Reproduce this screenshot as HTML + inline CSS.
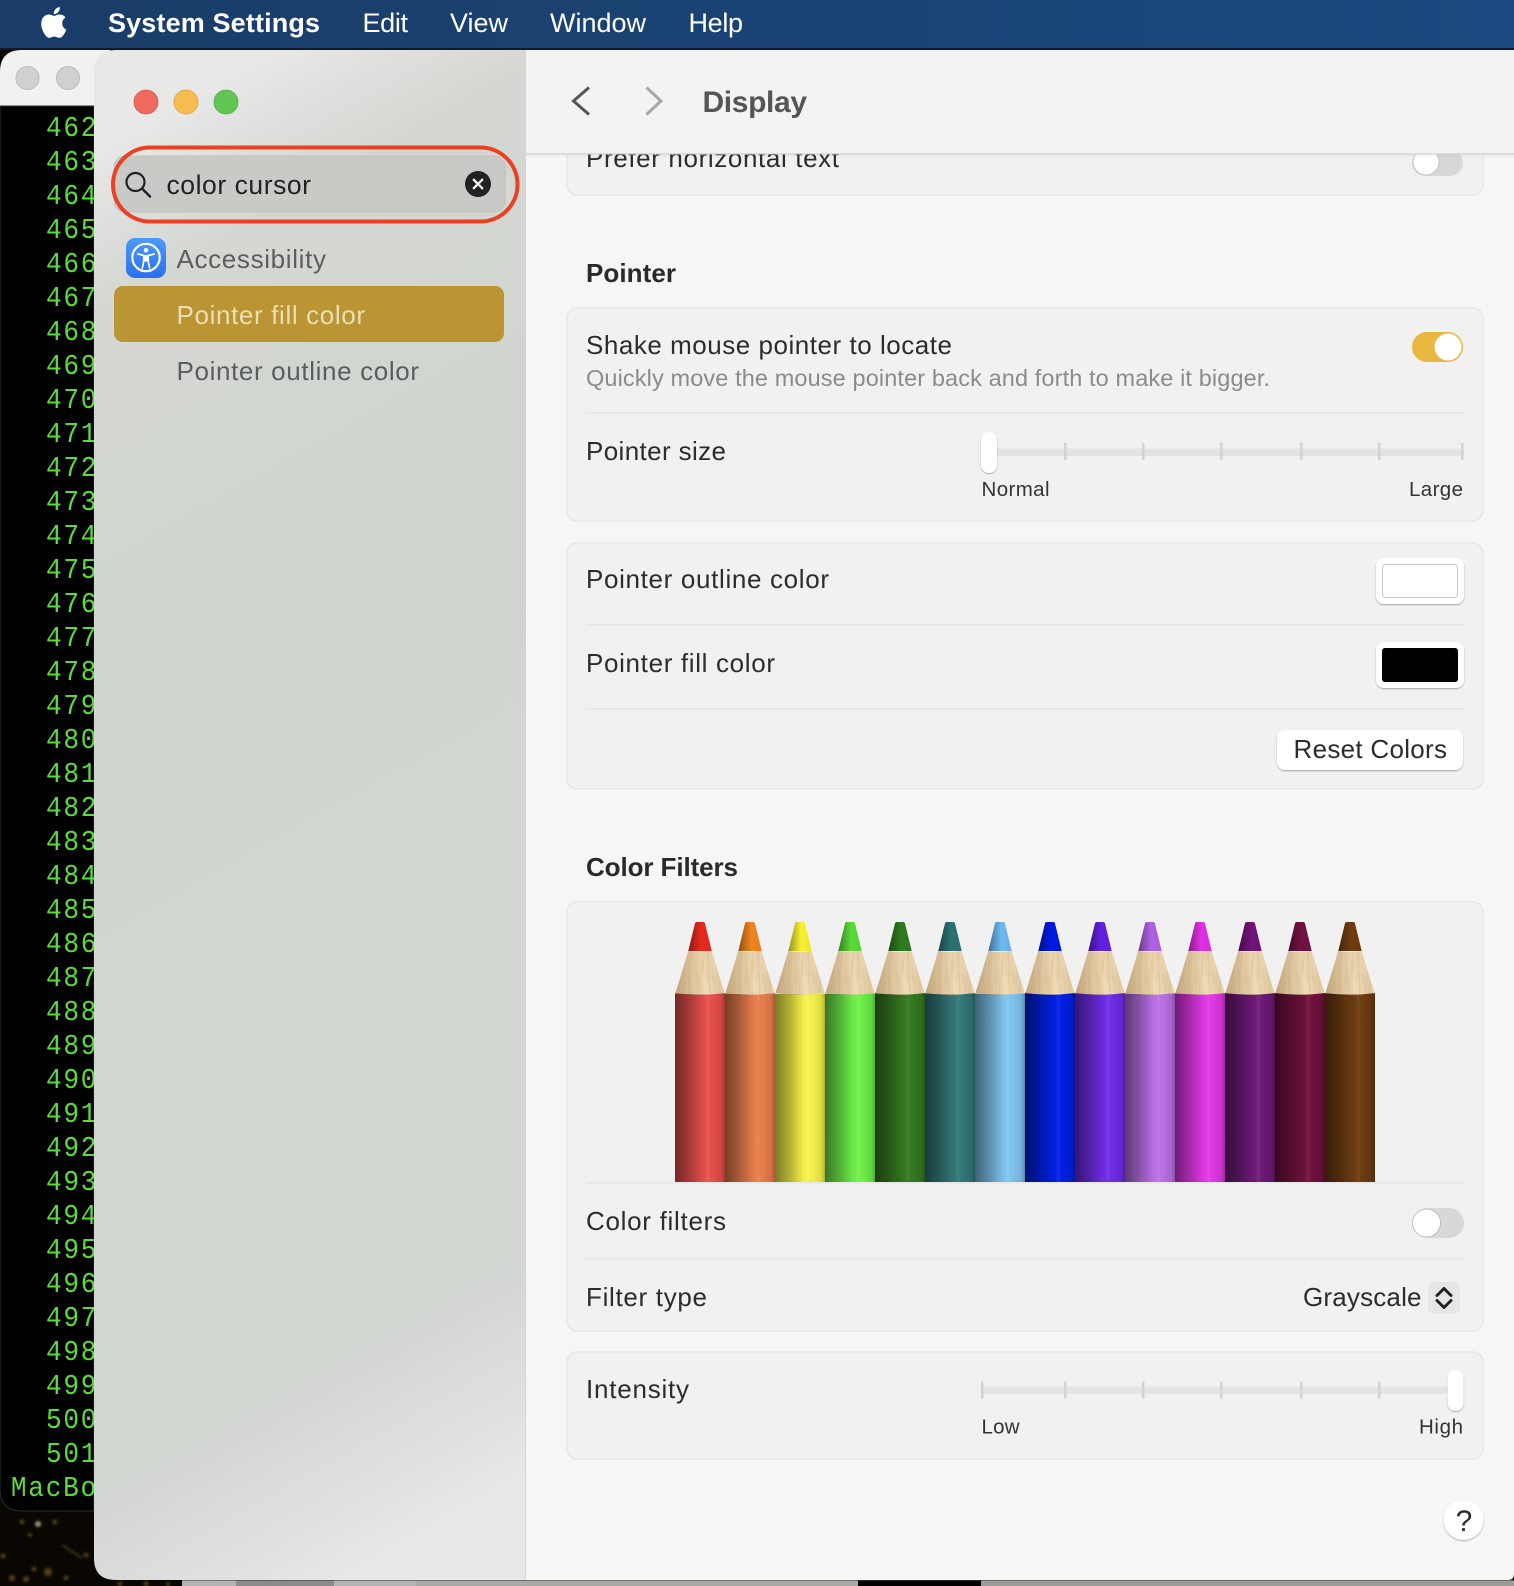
<!DOCTYPE html>
<html lang="en">
<head>
<meta charset="utf-8">
<title>System Settings - Display</title>
<style>
html,body{margin:0;padding:0;background:#0a0703;width:1514px;height:1586px;overflow:hidden}
svg{display:block}
text{font-family:"Liberation Sans",sans-serif}
.t{font-size:26px;fill:#2c2c2c}
.s{font-size:23.5px;fill:#8b8b8b}
.m{font-size:20.5px;fill:#333}
.b{font-size:26px;font-weight:700;fill:#2a2a2a}
.mn{font-size:27px;fill:#fff}
.n{font-size:26px;fill:#59605b}
.c{font-family:"Liberation Mono",monospace;font-size:29px;fill:#5cdc3c;letter-spacing:1.93px}
.card{fill:#f1f1f1;stroke:#e7e7e7;stroke-width:1.5}
.tk{fill:#d2d2d2}
</style>
</head>
<body>
<svg xmlns="http://www.w3.org/2000/svg" width="1514" height="1586" viewBox="0 0 1514 1586">
<defs>
<linearGradient id="menu" x1="0" x2="1" y1="0" y2="0"><stop offset="0" stop-color="#1a3c67"/><stop offset="1" stop-color="#1b4a80"/></linearGradient>
<linearGradient id="side" x1=".42" y1="0" x2=".58" y2="1"><stop offset="0" stop-color="#e8e9e7"/><stop offset=".045" stop-color="#dfe0dd"/><stop offset=".1" stop-color="#d5d7d2"/><stop offset=".3" stop-color="#d0d5cf"/><stop offset=".86" stop-color="#d2d6d1"/><stop offset=".96" stop-color="#e1e2e0"/><stop offset="1" stop-color="#e8e8e7"/></linearGradient>
<linearGradient id="shade" x1="0" x2="1" y1="0" y2="0"><stop offset="0" stop-color="#000" stop-opacity=".5"/><stop offset=".3" stop-color="#000" stop-opacity=".27"/><stop offset=".58" stop-color="#000" stop-opacity=".02"/><stop offset=".66" stop-color="#fff" stop-opacity=".07"/><stop offset=".76" stop-color="#000" stop-opacity=".02"/><stop offset=".93" stop-color="#000" stop-opacity=".12"/><stop offset="1" stop-color="#000" stop-opacity=".3"/></linearGradient>
<linearGradient id="wood" x1="0" x2="1" y1="0" y2="0"><stop offset="0" stop-color="#c2a47c"/><stop offset=".35" stop-color="#e0c9a2"/><stop offset=".62" stop-color="#f0dcb6"/><stop offset="1" stop-color="#e3cda6"/></linearGradient>
<linearGradient id="tipS" x1="0" x2="1" y1="0" y2="0"><stop offset="0" stop-color="#000" stop-opacity=".4"/><stop offset=".55" stop-color="#000" stop-opacity="0"/><stop offset="1" stop-color="#000" stop-opacity=".05"/></linearGradient>
<linearGradient id="acc" x1="0" x2="0" y1="0" y2="1"><stop offset="0" stop-color="#4b9bfb"/><stop offset="1" stop-color="#2a6fee"/></linearGradient>
<clipPath id="win"><path d="M116 50H1514V1574Q1514 1580 1508 1580H116Q94 1580 94 1558V72Q94 50 116 50Z"/></clipPath>
<clipPath id="term"><path d="M0 106H94V1511H22Q0 1511 0 1489Z"/></clipPath>
<filter id="sh" x="-30%" y="-30%" width="160%" height="170%"><feDropShadow dx="0" dy="1" stdDeviation=".9" flood-color="#000" flood-opacity=".32"/></filter>
<filter id="bl" x="-5%" y="-5%" width="110%" height="110%"><feGaussianBlur stdDeviation="1.300"/></filter>
<filter id="grain" x="0" y="0" width="100%" height="100%">
<feTurbulence type="fractalNoise" baseFrequency=".45 .035" numOctaves="2" seed="4" result="n"/>
<feColorMatrix in="n" type="matrix" values="0 0 0 0 .55  0 0 0 0 .38  0 0 0 0 .18  0 0 0 .9 -.28" result="c"/>
<feComposite in="c" in2="SourceGraphic" operator="in" result="g"/>
<feMerge><feMergeNode in="SourceGraphic"/><feMergeNode in="g"/></feMerge>
</filter>
<g id="pc">
<path d="M13.300 951L20 923.500Q20.300 922 22 922H28Q29.700 922 30 923.500L36.700 951Z" fill="url(#tipS)"/>
<path d="M0.500 993L13.300 951Q25 953 36.700 951L49.500 993Q25 996.500 0.500 993Z" fill="url(#wood)" filter="url(#grain)"/>
<rect x="0" y="994" width="50" height="188" fill="url(#shade)"/>
</g>
</defs>

<!-- wallpaper -->
<rect width="1514" height="1586" fill="#0a0703"/>
<g fill="#6d5a22" opacity=".7" filter="url(#bl)">
<circle cx="38" cy="1524" r="3" fill="#d8d4b0"/><circle cx="22" cy="1522" r="2.500"/><circle cx="55" cy="1522" r="2.500"/><circle cx="30" cy="1535" r="2"/><path d="M62 1545L82 1558" stroke="#54481c" stroke-width="2"/><circle cx="48" cy="1572" r="4"/><circle cx="34" cy="1569" r="2.500"/><circle cx="12" cy="1578" r="3"/><circle cx="26" cy="1579" r="3"/><circle cx="3" cy="1556" r="2.500"/><circle cx="86" cy="1555" r="2.500"/><circle cx="66" cy="1578" r="2.500"/><circle cx="120" cy="1584" r="2.500"/><circle cx="146" cy="1584" r="2.500"/><circle cx="168" cy="1584" r="2"/>
</g>
<!-- bottom dock strip -->
<rect x="182" y="1580" width="54" height="6" fill="#b3b3b1"/>
<rect x="236" y="1580" width="98" height="6" fill="#8b8b8b"/>
<rect x="334" y="1580" width="82" height="6" fill="#b4b4b2"/>
<rect x="416" y="1580" width="442" height="6" fill="#a9a9a5"/>
<rect x="858" y="1580" width="123" height="6" fill="#000"/>
<rect x="981" y="1580" width="533" height="6" fill="#9b9b98"/>
<rect x="182" y="1580" width="1332" height="1" fill="#444" opacity=".6"/>

<!-- back terminal window -->
<path d="M0 106V72Q0 50 22 50H110V106Z" fill="#f1f1f1"/>
<circle cx="27.500" cy="78" r="11.500" fill="#d0d0d0" stroke="#bcbcbc" stroke-width="1"/>
<circle cx="68" cy="78" r="11.500" fill="#d0d0d0" stroke="#bcbcbc" stroke-width="1"/>
<path d="M0 106H94V1511H22Q0 1511 0 1489Z" fill="#000" stroke="#2c2c2c"/>
<g clip-path="url(#term)">
<g transform="translate(46,0) scale(.9,1)">
<text class="c" x="0" y="136">462</text>
<text class="c" x="0" y="170">463</text>
<text class="c" x="0" y="204">464</text>
<text class="c" x="0" y="238">465</text>
<text class="c" x="0" y="272">466</text>
<text class="c" x="0" y="306">467</text>
<text class="c" x="0" y="340">468</text>
<text class="c" x="0" y="374">469</text>
<text class="c" x="0" y="408">470</text>
<text class="c" x="0" y="442">471</text>
<text class="c" x="0" y="476">472</text>
<text class="c" x="0" y="510">473</text>
<text class="c" x="0" y="544">474</text>
<text class="c" x="0" y="578">475</text>
<text class="c" x="0" y="612">476</text>
<text class="c" x="0" y="646">477</text>
<text class="c" x="0" y="680">478</text>
<text class="c" x="0" y="714">479</text>
<text class="c" x="0" y="748">480</text>
<text class="c" x="0" y="782">481</text>
<text class="c" x="0" y="816">482</text>
<text class="c" x="0" y="850">483</text>
<text class="c" x="0" y="884">484</text>
<text class="c" x="0" y="918">485</text>
<text class="c" x="0" y="952">486</text>
<text class="c" x="0" y="986">487</text>
<text class="c" x="0" y="1020">488</text>
<text class="c" x="0" y="1054">489</text>
<text class="c" x="0" y="1088">490</text>
<text class="c" x="0" y="1122">491</text>
<text class="c" x="0" y="1156">492</text>
<text class="c" x="0" y="1190">493</text>
<text class="c" x="0" y="1224">494</text>
<text class="c" x="0" y="1258">495</text>
<text class="c" x="0" y="1292">496</text>
<text class="c" x="0" y="1326">497</text>
<text class="c" x="0" y="1360">498</text>
<text class="c" x="0" y="1394">499</text>
<text class="c" x="0" y="1428">500</text>
<text class="c" x="0" y="1462">501</text>
<text class="c" x="-39" y="1496">MacBook</text>
</g>
</g>

<!-- main window -->
<g clip-path="url(#win)">
<rect x="94" y="50" width="432" height="1530" fill="url(#side)"/>
<rect x="525.500" y="50" width="989" height="1530" fill="#f6f6f6"/>
<rect x="525" y="50" width="1" height="1530" fill="#d2d5d0"/>

<!-- content -->
<rect x="567" y="100" width="916" height="95" rx="10" class="card"/>
<text class="t" x="586" y="167" textLength="253">Prefer horizontal text</text>
<rect x="1412" y="150" width="51" height="26" rx="13" fill="#d8d8d8"/>
<circle cx="1426" cy="162" r="13" fill="#fff" stroke="#bbb" stroke-width=".8"/>

<text class="b" x="586" y="282" textLength="90">Pointer</text>

<rect x="567" y="308" width="916" height="213" rx="10" class="card"/>
<text class="t" x="586" y="354" textLength="366">Shake mouse pointer to locate</text>
<text class="s" x="586" y="386" textLength="684">Quickly move the mouse pointer back and forth to make it bigger.</text>
<rect x="1412" y="332" width="51" height="30" rx="15" fill="#e8b840"/>
<circle cx="1448" cy="347" r="13.500" fill="#fff"/>
<rect x="586" y="412" width="878" height="1.500" fill="#e6e6e6"/>
<text class="t" x="586" y="460" textLength="140">Pointer size</text>
<rect x="985" y="448.500" width="479" height="7.500" rx="3" fill="#e3e3e3"/>
<rect x="1064" y="443" width="2.500" height="17" class="tk"/><rect x="1142" y="443" width="2.500" height="17" class="tk"/><rect x="1220" y="443" width="2.500" height="17" class="tk"/><rect x="1300" y="443" width="2.500" height="17" class="tk"/><rect x="1378" y="443" width="2.500" height="17" class="tk"/><rect x="1461" y="443" width="2.500" height="17" class="tk"/>
<rect x="981" y="432" width="16" height="41" rx="8" fill="#fff" filter="url(#sh)"/>
<text class="m" x="981.500" y="496" textLength="68">Normal</text>
<text class="m" x="1409" y="496" textLength="54">Large</text>

<rect x="567" y="543" width="916" height="246" rx="10" class="card"/>
<text class="t" x="586" y="588" textLength="243">Pointer outline color</text>
<rect x="1376" y="558" width="88" height="46" rx="8" fill="#fff" filter="url(#sh)"/>
<rect x="1382.500" y="564.500" width="75" height="33" rx="3" fill="#fff" stroke="#c8c8c8" stroke-width="1"/>
<rect x="586" y="624" width="878" height="1.500" fill="#e6e6e6"/>
<text class="t" x="586" y="672" textLength="189">Pointer fill color</text>
<rect x="1376" y="642" width="88" height="46" rx="8" fill="#fff" filter="url(#sh)"/>
<rect x="1382" y="648" width="76" height="34" rx="3" fill="#000"/>
<rect x="586" y="708" width="878" height="1.500" fill="#e6e6e6"/>
<rect x="1277" y="730" width="186" height="40" rx="8" fill="#fff" filter="url(#sh)"/>
<text class="t" x="1293.500" y="758" textLength="153.500">Reset Colors</text>

<text class="b" x="586" y="876" textLength="152">Color Filters</text>

<rect x="567" y="902" width="916" height="429" rx="10" class="card"/>
<g transform="translate(675,0)"><path d="M13.300 951L20 923.500Q20.300 922 22 922H28Q29.700 922 30 923.500L36.700 951Z" fill="#e8291f"/><rect y="993" width="50" height="189" fill="#e8504c"/><use href="#pc"/></g>
<g transform="translate(725,0)"><path d="M13.300 951L20 923.500Q20.300 922 22 922H28Q29.700 922 30 923.500L36.700 951Z" fill="#f0841f"/><rect y="993" width="50" height="189" fill="#ea7f4c"/><use href="#pc"/></g>
<g transform="translate(775,0)"><path d="M13.300 951L20 923.500Q20.300 922 22 922H28Q29.700 922 30 923.500L36.700 951Z" fill="#f8f032"/><rect y="993" width="50" height="189" fill="#f9f44c"/><use href="#pc"/></g>
<g transform="translate(825,0)"><path d="M13.300 951L20 923.500Q20.300 922 22 922H28Q29.700 922 30 923.500L36.700 951Z" fill="#5adb38"/><rect y="993" width="50" height="189" fill="#70f24a"/><use href="#pc"/></g>
<g transform="translate(875,0)"><path d="M13.300 951L20 923.500Q20.300 922 22 922H28Q29.700 922 30 923.500L36.700 951Z" fill="#2e7c1e"/><rect y="993" width="50" height="189" fill="#357a20"/><use href="#pc"/></g>
<g transform="translate(925,0)"><path d="M13.300 951L20 923.500Q20.300 922 22 922H28Q29.700 922 30 923.500L36.700 951Z" fill="#2b7272"/><rect y="993" width="50" height="189" fill="#347878"/><use href="#pc"/></g>
<g transform="translate(975,0)"><path d="M13.300 951L20 923.500Q20.300 922 22 922H28Q29.700 922 30 923.500L36.700 951Z" fill="#6db9ee"/><rect y="993" width="50" height="189" fill="#80c6f1"/><use href="#pc"/></g>
<g transform="translate(1025,0)"><path d="M13.300 951L20 923.500Q20.300 922 22 922H28Q29.700 922 30 923.500L36.700 951Z" fill="#001ae4"/><rect y="993" width="50" height="189" fill="#0020e6"/><use href="#pc"/></g>
<g transform="translate(1075,0)"><path d="M13.300 951L20 923.500Q20.300 922 22 922H28Q29.700 922 30 923.500L36.700 951Z" fill="#6220e2"/><rect y="993" width="50" height="189" fill="#702ce8"/><use href="#pc"/></g>
<g transform="translate(1125,0)"><path d="M13.300 951L20 923.500Q20.300 922 22 922H28Q29.700 922 30 923.500L36.700 951Z" fill="#b062e4"/><rect y="993" width="50" height="189" fill="#bc72e8"/><use href="#pc"/></g>
<g transform="translate(1175,0)"><path d="M13.300 951L20 923.500Q20.300 922 22 922H28Q29.700 922 30 923.500L36.700 951Z" fill="#e030e4"/><rect y="993" width="50" height="189" fill="#e438e8"/><use href="#pc"/></g>
<g transform="translate(1225,0)"><path d="M13.300 951L20 923.500Q20.300 922 22 922H28Q29.700 922 30 923.500L36.700 951Z" fill="#711478"/><rect y="993" width="50" height="189" fill="#6e1a78"/><use href="#pc"/></g>
<g transform="translate(1275,0)"><path d="M13.300 951L20 923.500Q20.300 922 22 922H28Q29.700 922 30 923.500L36.700 951Z" fill="#711240"/><rect y="993" width="50" height="189" fill="#70123c"/><use href="#pc"/></g>
<g transform="translate(1325,0)"><path d="M13.300 951L20 923.500Q20.300 922 22 922H28Q29.700 922 30 923.500L36.700 951Z" fill="#703c0e"/><rect y="993" width="50" height="189" fill="#6e3c12"/><use href="#pc"/></g>
<rect x="586" y="1182" width="878" height="1.500" fill="#e6e6e6"/>
<text class="t" x="586" y="1230" textLength="140">Color filters</text>
<rect x="1413" y="1208" width="51" height="30" rx="15" fill="#d8d8d8"/>
<circle cx="1426.500" cy="1223" r="14" fill="#fff" stroke="#b5b5b5" stroke-width=".8"/>
<rect x="586" y="1258" width="878" height="1.500" fill="#e6e6e6"/>
<text class="t" x="586" y="1306" textLength="121">Filter type</text>
<text class="t" x="1303" y="1306" textLength="118.500">Grayscale</text>
<rect x="1428" y="1282" width="32" height="32" rx="6" fill="#e6e6e6"/>
<path d="M1437 1295.500l7-7 7 7M1437 1300.500l7 7 7-7" fill="none" stroke="#222" stroke-width="3" stroke-linecap="round" stroke-linejoin="round"/>

<rect x="567" y="1352" width="916" height="107" rx="10" class="card"/>
<text class="t" x="586" y="1398" textLength="103">Intensity</text>
<rect x="982" y="1386.500" width="466" height="7.500" rx="3" fill="#e3e3e3"/>
<rect x="981" y="1381.500" width="2.500" height="17" class="tk"/><rect x="1064" y="1381.500" width="2.500" height="17" class="tk"/><rect x="1142" y="1381.500" width="2.500" height="17" class="tk"/><rect x="1220" y="1381.500" width="2.500" height="17" class="tk"/><rect x="1300" y="1381.500" width="2.500" height="17" class="tk"/><rect x="1378" y="1381.500" width="2.500" height="17" class="tk"/>
<rect x="1447.500" y="1370" width="16" height="41" rx="8" fill="#fff" filter="url(#sh)"/>
<text class="m" x="981.500" y="1433.500" textLength="38">Low</text>
<text class="m" x="1419" y="1433.500" textLength="44">High</text>

<circle cx="1463.500" cy="1520" r="20" fill="#fff" filter="url(#sh)"/>
<text x="1464" y="1531" text-anchor="middle" font-size="30" fill="#2a2a2a">?</text>

<!-- header -->
<rect x="526" y="50" width="990" height="104" fill="#f3f3f3"/>
<rect x="526" y="153" width="990" height="1.500" fill="#d9d9d9"/>
<rect x="526" y="154.500" width="990" height="2" fill="#000" opacity=".04"/>
<path d="M589 87.500L573.500 101 589 114.500" fill="none" stroke="#555" stroke-width="3"/>
<path d="M646.500 87.500L661 101 646.500 114.500" fill="none" stroke="#a8a8a8" stroke-width="3"/>
<text x="702.500" y="112" font-size="30" font-weight="700" fill="#555" textLength="104.500">Display</text>

<!-- sidebar contents -->
<circle cx="146" cy="102" r="12" fill="#ee6a5f" stroke="#d5564c" stroke-width=".8"/>
<circle cx="186" cy="102" r="12" fill="#f5bd4f" stroke="#d9a23a" stroke-width=".8"/>
<circle cx="226" cy="102" r="12" fill="#61c554" stroke="#4fae44" stroke-width=".8"/>

<rect x="114" y="156" width="391" height="56" rx="11" fill="#c8cac5" stroke="#bfc1bc" stroke-width="1"/>
<rect x="113" y="147.500" width="404.500" height="74" rx="37" fill="none" stroke="#ea4125" stroke-width="4"/>
<circle cx="135.500" cy="182" r="9" fill="none" stroke="#222" stroke-width="2.200"/>
<path d="M142 188.500L150 196.500" stroke="#222" stroke-width="2.500" stroke-linecap="round"/>
<text x="166.500" y="194" font-size="26.500" fill="#222" textLength="144.500">color cursor</text>
<circle cx="478" cy="184" r="13" fill="#222"/>
<path d="M473.700 179.700l8.600 8.600M482.300 179.700l-8.600 8.600" stroke="#fff" stroke-width="2.200" stroke-linecap="round"/>

<rect x="126" y="238" width="40" height="40" rx="9" fill="url(#acc)"/>
<circle cx="146" cy="257.500" r="13.700" fill="none" stroke="#fff" stroke-width="2.200"/>
<circle cx="146" cy="250.300" r="2.300" fill="#fff"/>
<path d="M137.800 254L143.800 255.500V261L142.400 268M154.200 254L148.200 255.500V261L149.600 268" fill="none" stroke="#fff" stroke-width="1.700" stroke-linecap="round" stroke-linejoin="round"/>
<rect x="143.800" y="255" width="4.400" height="6.500" fill="#fff"/>
<text class="n" x="176.500" y="268" textLength="149.500">Accessibility</text>
<rect x="114" y="286" width="390" height="56" rx="9" fill="#bb9433"/>
<text x="176.500" y="324" font-size="26" fill="#eadfb4" textLength="188.500">Pointer fill color</text>
<text class="n" x="176.500" y="380" textLength="242.500">Pointer outline color</text>
</g>

<!-- menu bar -->
<rect width="1514" height="49" fill="url(#menu)"/>
<rect y="48" width="1514" height="2" fill="#0c1a2a"/>
<path transform="translate(36.600,4.600) scale(1.500)" fill="#fff" d="M17.050 12.540c-.03-2.600 2.120-3.850 2.220-3.910-1.210-1.770-3.090-2.010-3.760-2.040-1.600-.16-3.120.94-3.930.94-.81 0-2.060-.92-3.390-.89-1.740.03-3.350 1.010-4.250 2.570-1.810 3.140-.46 7.800 1.300 10.350.86 1.250 1.890 2.650 3.240 2.600 1.300-.05 1.790-.84 3.360-.84 1.570 0 2.010.84 3.390.81 1.400-.02 2.280-1.270 3.140-2.530.99-1.450 1.400-2.860 1.420-2.930-.03-.01-2.720-1.040-2.740-4.130zM14.460 4.900c.72-.87 1.200-2.080 1.070-3.280-1.030.04-2.280.69-3.020 1.550-.66.77-1.240 2-1.090 3.180 1.150.09 2.330-.59 3.040-1.450z"/>
<text class="mn" x="108" y="32" font-weight="700" textLength="212">System Settings</text>
<text class="mn" x="362.500" y="32" textLength="45.500">Edit</text>
<text class="mn" x="450" y="32" textLength="58">View</text>
<text class="mn" x="550" y="32" textLength="96">Window</text>
<text class="mn" x="688.500" y="32" textLength="54.500">Help</text>
</svg>
</body>
</html>
